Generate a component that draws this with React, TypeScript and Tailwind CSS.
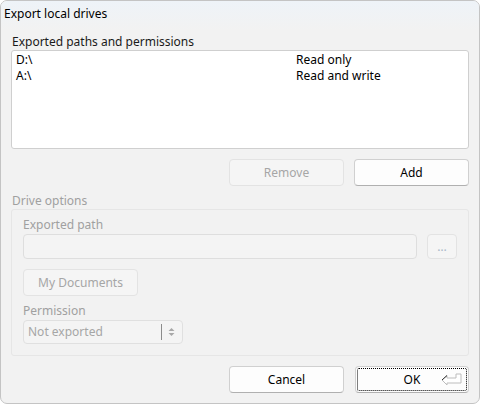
import React from "react";

const font = { fontFamily: '"Noto Sans", sans-serif' };

function Btn({ children, disabled, className = "" }: { children: React.ReactNode; disabled?: boolean; className?: string }) {
  return (
    <div
      className={
        "flex items-center justify-center rounded-[4px] border text-[12px] " +
        (disabled
          ? "border-[#e3e3e3] bg-[#f5f5f5] text-[#a6a6a6] "
          : "border-[#d0d0d0] border-b-[#b0b0b0] bg-[#fdfdfd] text-black ") +
        className
      }
    >
      {children}
    </div>
  );
}

export default function App() {
  return (
    <div className="w-[480px] h-[404px] bg-white" style={font}>
      <div className="w-[480px] h-[404px] rounded-[7px] border border-[#c4c4c4] bg-[#f2f2f2] flex flex-col overflow-hidden">
        <div className="h-[29px] bg-gradient-to-b from-[#eef3f8] to-[#f2f2f2] pl-[3px] pt-[5px] text-[12px] text-black leading-[16px]">
          Export local drives
        </div>
        <div className="pl-[10px] pr-[10px] flex flex-col">
          <div className="text-[12px] leading-[16px] text-[#1a1a1a] pl-[1px] pt-[4px]">Exported paths and permissions</div>
          <div className="h-[99px] bg-white border border-[#cfcfcf] rounded-[3px] pt-[1px] pl-[4px] text-[12px] leading-[16px]">
            <div className="flex"><span className="w-[280px]">D:\</span><span>Read only</span></div>
            <div className="flex"><span className="w-[280px]">A:\</span><span>Read and write</span></div>
          </div>
          <div className="flex justify-end gap-[10px] mt-[10px]">
            <Btn disabled className="w-[115px] h-[27px]">Remove</Btn>
            <Btn className="w-[115px] h-[27px]">Add</Btn>
          </div>
          <div className="text-[12px] leading-[16px] text-[#a0a0a0] pl-[1px] mt-[7px]">Drive options</div>
          <div className="h-[147px] border border-[#e6e6e6] rounded-[3px] px-[11px] flex flex-col">
            <div className="text-[12px] leading-[16px] text-[#a0a0a0] mt-[7px]">Exported path</div>
            <div className="flex items-center gap-[10px] mt-[1px]">
              <div className="w-[394px] h-[25px] rounded-[4px] border border-[#dedede] bg-[#f4f4f4]" />
              <Btn disabled className="w-[30px] h-[25px] text-[#a9b8c8]">…</Btn>
            </div>
            <Btn disabled className="w-[115px] h-[27px] mt-[10px]">My Documents</Btn>
            <div className="text-[12px] leading-[16px] text-[#a0a0a0] mt-[7px]">Permission</div>
            <div className="w-[160px] h-[24px] mt-[1px] rounded-[4px] border border-[#e0e0e0] bg-[#f4f4f4] flex items-center text-[12px] text-[#a6a6a6]">
              <span className="pl-[4px] flex-1">Not exported</span>
              <div className="w-[1px] h-[16px] bg-[#8c8c8c]" />
              <svg width="20" height="16" viewBox="0 0 20 16">
                <path d="M6.5 7 L9.5 4 L12.5 7 Z" fill="#a8a8a8" />
                <path d="M6.5 9 L9.5 12 L12.5 9 Z" fill="#a8a8a8" />
              </svg>
            </div>
          </div>
          <div className="flex justify-end gap-[11px] mt-[10px]">
            <Btn className="w-[115px] h-[27px]">Cancel</Btn>
            <div className="relative w-[114px] h-[27px] rounded-[4px] border border-[#d0d0d0] border-b-[#b0b0b0] bg-[#fdfdfd] flex items-center justify-center text-[12px]">
              <div className="absolute inset-[1px] border border-dotted border-black rounded-[2px]" />
              <span>OK</span>
              <svg className="absolute right-[5px] top-[5px]" width="22" height="15" viewBox="0 0 22 15">
                <path d="M1 8 L6 3.5 L6 6 L15 6 L15 2 L20 2 L20 11 L6 11 L6 13 Z" fill="#ffffff" stroke="#bdbdbd" strokeWidth="1" />
                <path d="M1 8 L6 3.5" stroke="#333" strokeWidth="1" />
              </svg>
            </div>
          </div>
        </div>
      </div>
    </div>
  );
}
